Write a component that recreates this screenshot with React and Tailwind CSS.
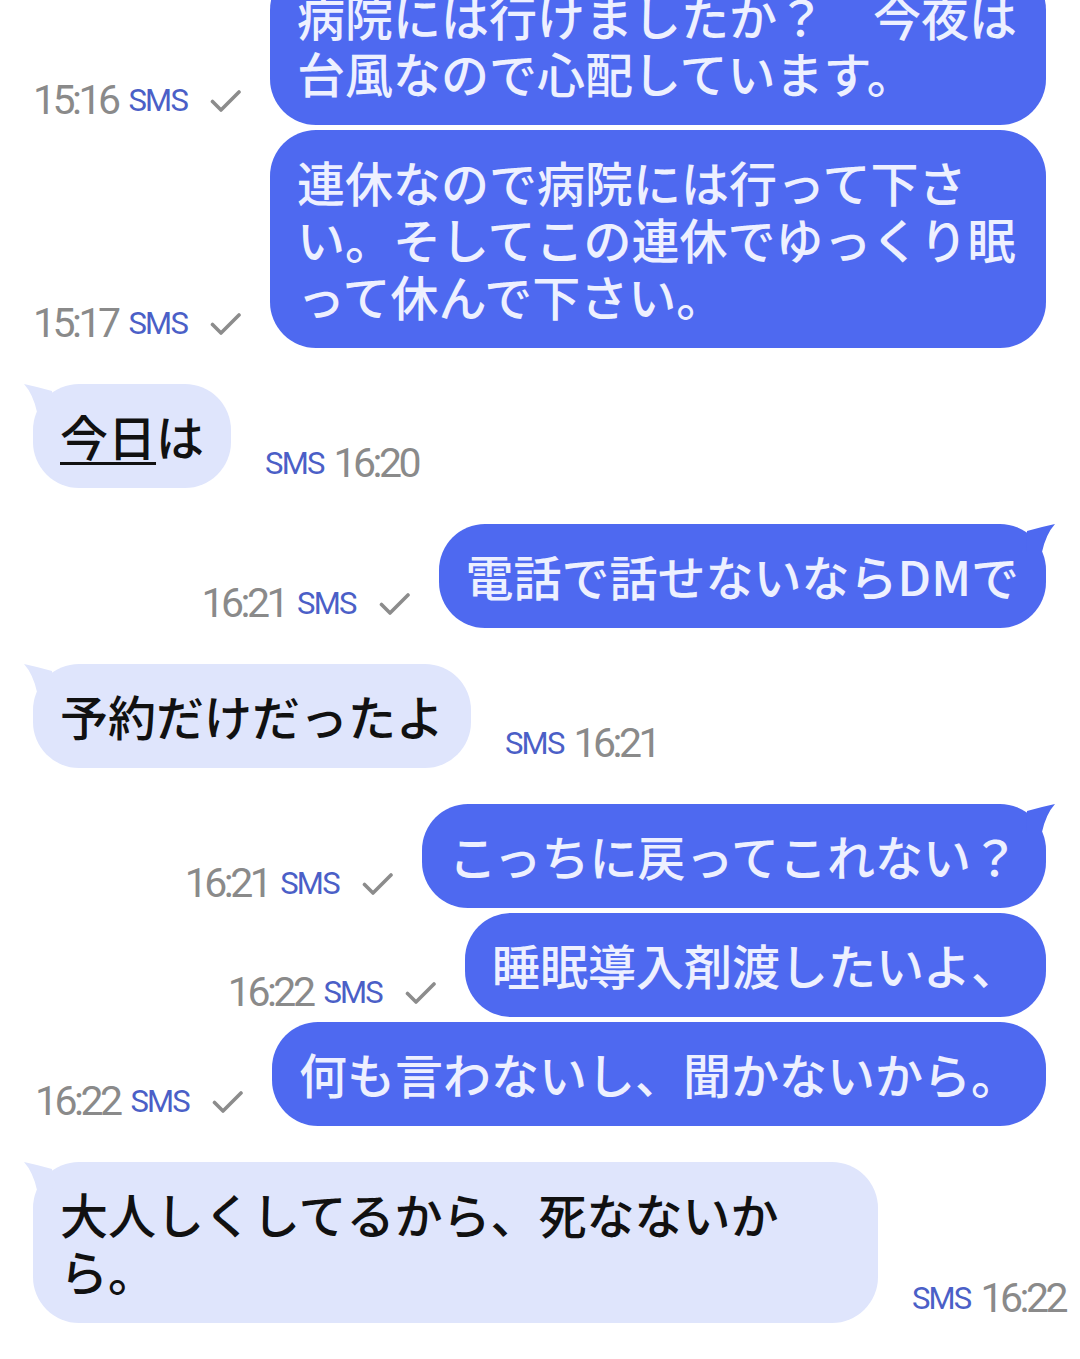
const messages = [
  { id: 1, from: 'me', time: '15:16', text: '病院には行けましたか？　今夜は台風なので心配しています。', tail: false, first: true },
  { id: 2, from: 'me', time: '15:17', text: '連休なので病院には行って下さい。そしてこの連休でゆっくり眠って休んで下さい。' },
  { id: 3, from: 'them', time: '16:20', text: 'today' },
  { id: 4, from: 'me', time: '16:21', text: '電話で話せないならDMで', tail: true },
  { id: 5, from: 'them', time: '16:21', text: '予約だけだったよ' },
  { id: 6, from: 'me', time: '16:21', text: 'こっちに戻ってこれない？', tail: true },
  { id: 7, from: 'me', time: '16:22', text: '睡眠導入剤渡したいよ、' },
  { id: 8, from: 'me', time: '16:22', text: '何も言わないし、聞かないから。' },
  { id: 9, from: 'them', time: '16:22', text: '大人しくしてるから、死なないから。' },
];

const jp = { fontFamily: '"Noto Sans CJK JP", "Noto Sans", sans-serif' };
const roboto = { fontFamily: 'Roboto, "Liberation Sans", sans-serif' };

function Tail({ color, side }) {
  const pos = side === 'right' ? 'right-[-10px]' : 'left-[-10px] -scale-x-100';
  return (
    <svg className={`absolute top-0 ${pos}`} width="60" height="30" viewBox="0 0 60 30">
      <path d="M31 7 Q45 3 59 0 Q50 10 46 28 L30 28 Z" fill={color} />
    </svg>
  );
}

function Check() {
  return (
    <svg width="31" height="22" viewBox="0 0 31 22" fill="none">
      <path d="M2.5 11.5 L11 20 L29 2" stroke="#8c8c8c" strokeWidth="3.6" strokeLinecap="round" strokeLinejoin="round" />
    </svg>
  );
}

function Time({ children }) {
  return (
    <span className="text-[41px] leading-none tracking-[-3.5px] text-[#8a8a8a]" style={roboto}>
      {children}
    </span>
  );
}

function Sms() {
  return (
    <span className="text-[31px] leading-none tracking-[-1.8px] text-[#4b5fc7]" style={roboto}>
      SMS
    </span>
  );
}

function Outgoing({ msg }) {
  return (
    <div className={`flex items-end justify-end pr-[34px] ${msg.first ? 'mt-[-36px]' : msg.tail ? 'mt-[36px]' : 'mt-[5px]'}`}>
      <div className="mb-[4px] mr-[29px] flex items-center">
        <Time>{msg.time}</Time>
        <span className="ml-[11px]">
          <Sms />
        </span>
        <span className="ml-[23px]">
          <Check />
        </span>
      </div>
      <div className="relative max-w-[776px] rounded-[46px] bg-[#4e69f0] px-[27px] pt-[23px] pb-[24px]">
        {msg.tail ? <Tail color="#4e69f0" side="right" /> : null}
        <p className="relative text-[48px] font-medium leading-[57px] text-[#edf0ff] [line-break:loose]" style={jp}>
          {msg.text}
        </p>
      </div>
    </div>
  );
}

function Incoming({ msg }) {
  return (
    <div className="mt-[36px] flex items-end pl-[33px]">
      <div className="relative max-w-[845px] rounded-[46px] bg-[#dfe5fc] px-[27px] pt-[23px] pb-[24px]">
        <Tail color="#dfe5fc" side="left" />
        <p className="relative text-[48px] font-medium leading-[57px] text-[#111111] [line-break:loose]" style={jp}>
          {msg.text === 'today' ? (
            <>
              <span className="underline decoration-[2.5px] underline-offset-[6px]">今日</span>は
            </>
          ) : (
            msg.text
          )}
        </p>
      </div>
      <div className="mb-[4px] ml-[34px] flex items-center">
        <Sms />
        <span className="ml-[10px]">
          <Time>{msg.time}</Time>
        </span>
      </div>
    </div>
  );
}

export default function App() {
  return (
    <div className="h-[1359px] w-full overflow-hidden bg-white">
      {messages.map((msg) =>
        msg.from === 'me' ? <Outgoing key={msg.id} msg={msg} /> : <Incoming key={msg.id} msg={msg} />
      )}
    </div>
  );
}
